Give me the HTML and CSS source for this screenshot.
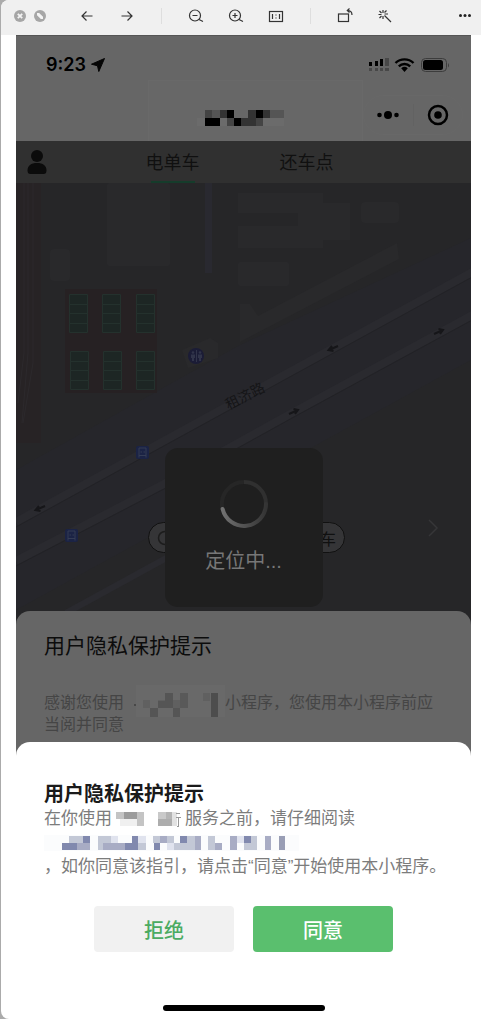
FILE: index.html
```html
<!DOCTYPE html>
<html lang="zh-CN">
<head>
<meta charset="utf-8">
<meta name="viewport" content="width=device-width, initial-scale=1">
<title>用户隐私保护提示</title>
<link rel="stylesheet" href="styles.css">
</head>
<body>
<div class="window">
  <header class="toolbar">
    <button class="win-btn" aria-label="关闭"><svg width="14" height="14" viewBox="0 0 14 14"><circle cx="7" cy="7" r="6" fill="#a6a6a6"/><path d="M4.800 4.800l4.400 4.400M9.200 4.800l-4.400 4.400" stroke="#f4f4f4" stroke-width="1.800"/></svg></button>
    <button class="win-btn" aria-label="缩放"><svg width="14" height="14" viewBox="0 0 14 14"><circle cx="7" cy="7" r="6" fill="#a6a6a6"/><path d="M4 6.200V4h2.200L10 7.800V10H7.800z" fill="#f4f4f4"/></svg></button>
    <div class="tools">
      <button class="tool" aria-label="后退"><svg class="ico" viewBox="0 0 20 20"><path d="M15.500 10H5M9.500 5.500L5 10l4.500 4.500"/></svg></button>
      <button class="tool" aria-label="前进"><svg class="ico" viewBox="0 0 20 20"><path d="M4.500 10H15M10.500 5.500L15 10l-4.500 4.500"/></svg></button>
      <span class="sep"></span>
      <button class="tool" aria-label="缩小"><svg class="ico" viewBox="0 0 20 20"><circle cx="9" cy="9.500" r="5.500"/><path d="M6.500 9.500h5M13 13.500l4 2"/></svg></button>
      <button class="tool" aria-label="放大"><svg class="ico" viewBox="0 0 20 20"><circle cx="9" cy="9.500" r="5.500"/><path d="M6.500 9.500h5M9 7v5M13 13.500l4 2"/></svg></button>
      <button class="tool" aria-label="实际大小"><svg class="ico" viewBox="0 0 20 20"><rect x="3.500" y="5.500" width="13" height="10"/><path d="M6.500 8v5M13.500 8v5M10 8.500v1M10 11.500v1"/></svg></button>
      <span class="sep"></span>
      <button class="tool" aria-label="旋转"><svg class="ico" viewBox="0 0 20 20"><rect x="3.500" y="8" width="10" height="7.500"/><path d="M12.500 4.500c3 0 4.500 1.500 4.500 4.500M14.500 2.500l-2.200 2 2.200 2"/></svg></button>
      <button class="tool" aria-label="标记"><svg class="ico" viewBox="0 0 20 20"><path d="M9.500 9.500l6.500 6.500M8 4v3M8 10v3M3.500 8.500h3M9.500 8h3.500M4.500 5l2 2M11.500 4.500l-2 2M6.500 10l-2 2"/></svg></button>
    </div>
    <button class="tool more" aria-label="更多"><svg class="ico" viewBox="0 0 20 20"><g fill="#222" stroke="none"><circle cx="5.500" cy="9.500" r="1.500"/><circle cx="10" cy="9.500" r="1.500"/><circle cx="14.500" cy="9.500" r="1.500"/></g></svg></button>
  </header>

  <main class="phone">
    <div class="status">
      <span class="time">9:23</span>
      <svg class="locate" width="14" height="14" viewBox="0 0 14 14"><path d="M13.500.5L7.800 13.500 6.500 7.800.5 6.200z" fill="#050505" stroke="#050505" stroke-linejoin="round"/></svg>
      <svg class="signals" width="82" height="16" viewBox="0 0 82 16">
        <path d="M1 5h3v4H1zM7 4h3v5H7zM12 2h3v7h-3z" fill="#000"/>
        <path d="M17 1h4v8h-4zM1 11h3v3H1zM7 11h3v3H7zM12 11h3v3h-3zM17 11h4v3h-4z" fill="#484848"/>
        <g fill="none" stroke="#000" stroke-width="2.400"><path d="M27.500 6a13 13 0 0 1 18 0M30.800 9.300a8.200 8.200 0 0 1 11.400 0"/></g>
        <path d="M33.200 11.300a5 5 0 0 1 6.600 0L36.500 15z" fill="#000"/>
        <rect x="53.500" y="1.500" width="25" height="13" rx="4" fill="none" stroke="#3c3c3c"/>
        <rect x="55" y="3" width="20" height="10" rx="2.500" fill="#000"/>
        <path d="M80 6v4.500q2-2 0-4.500" fill="#3c3c3c"/>
      </svg>
    </div>

    <div class="navbar">
      <div class="app-name">
        <svg width="88" height="16" viewBox="197 110 88 16" role="img" aria-label="小程序名称" shape-rendering="crispEdges">
          <path d="M205 110h7v8h-7zM227 118h7v8h-7zM256 118h7v8h-7z" fill="#444"/>
          <path d="M212 110h8v8h-8zM270 110h14v8h-14z" fill="#555"/>
          <path d="M220 110h7v8h-7zM248 110h8v8h-8zM263 110h7v8h-7zM241 118h15v8h-15z" fill="#333"/>
          <path d="M227 110h7v8h-7zM205 118h15v8h-15zM234 118h7v8h-7zM256 110h7v8h-7z" fill="#000"/>
          <path d="M197 118h8v8h-8zM220 118h7v8h-7zM263 118h21v8h-21z" fill="#6b6b6b"/>
        </svg>
      </div>
      <div class="capsule">
        <button class="cap-btn" aria-label="更多"><svg width="24" height="24" viewBox="0 0 24 24"><circle cx="3.500" cy="12" r="2.300"/><circle cx="12" cy="12" r="4"/><circle cx="20.500" cy="12" r="2.300"/></svg></button>
        <span class="cap-sep"></span>
        <button class="cap-btn" aria-label="关闭小程序"><svg width="24" height="24" viewBox="0 0 24 24"><circle cx="12" cy="12" r="9" fill="none" stroke="#000" stroke-width="2.500"/><circle cx="12" cy="12" r="3.800"/></svg></button>
      </div>
    </div>

    <nav class="tabs">
      <button class="me" aria-label="我的"><svg width="20" height="24" viewBox="0 0 20 24"><circle cx="10" cy="6" r="6"/><path d="M.5 20.500C.5 15.500 4 13 10 13s9.500 2.500 9.500 7.500q0 3.500-3 3.500h-13q-3 0-3-3.500z"/></svg></button>
      <a class="tab active" href="#bikes">电单车</a>
      <a class="tab" href="#points">还车点</a>
    </nav>

    <section class="map" aria-label="地图">
      <svg class="canvas" viewBox="16 183 455 445" preserveAspectRatio="xMidYMin slice">
        <rect x="16" y="183" width="455" height="445" fill="#262628"/>
        <path d="M471 238L240 345 16 470v140l455-250z" fill="#26262b"/>
        <path d="M16 183h25v260H16z" fill="#272325"/>
        <path d="M24 183v170l-6 50M28 183v170l-6 70M33 183v180l-10 60" stroke="#2c292c" fill="none"/>
        <g fill="#29292b">
          <rect x="107" y="183" width="63" height="83" rx="2"/>
          <rect x="50" y="249" width="20" height="32" rx="4"/>
          <path d="M238 193h85v10h27v37h-27v8h-85v-22h60v-13h-60z"/>
          <rect x="361" y="202" width="38" height="21" rx="4"/>
          <rect x="238" y="262" width="51" height="24" rx="2"/>
          <path d="M397 243l2 16-144 75-15 8v-38h10l8 12z"/>
          <path d="M182 350l28-12 8 5v15l-30 10z"/>
        </g>
        <path d="M205 183h7v90h-7z" fill="#292930"/>
        <path d="M65 289h92v104H65z" fill="#262123"/>
        <g fill="#1d2624" stroke="#24312d">
          <path id="court" d="M69.500 294.500h18v38h-18zM69.500 304.500h18M69.500 313.500h18M69.500 323.500h18"/>
          <use href="#court" x="33"/><use href="#court" x="67"/>
          <use href="#court" x="1" y="57"/><use href="#court" x="34" y="57"/><use href="#court" x="67" y="57"/>
        </g>
        <g fill="none" stroke="#2a2a2f" stroke-width="8">
          <path d="M476 270L16 522M476 313L294 412 164 484 16 561"/>
          <path d="M66 613L170 556" stroke-width="6"/>
        </g>
        <g fill="none" stroke="#222226" stroke-width="1"><path d="M476 275L16 527M476 318L294 417 164 489 16 566"/></g>
        <g fill="none" stroke="#161619" stroke-width="2">
          <path id="arrow-l" d="M338 346l-9 4M332 346l-3.500 4 5 1"/>
          <use href="#arrow-l" x="-293" y="160"/>
          <path id="arrow-r" d="M434 334l9-4M438.500 329l4.500 1-3 4"/>
          <use href="#arrow-r" x="-145" y="80"/>
        </g>
        <circle cx="196" cy="356" r="8" fill="#1b1c36"/>
        <path d="M196.500 350v12" stroke="#31344a" fill="none"/>
        <g fill="#31344a"><circle cx="193" cy="352.500" r="1.300"/><circle cx="200" cy="352.500" r="1.300"/><path d="M191 354.500h4v3.500h-1v3h-2v-3h-1zM198 354.500h4v3.500h-1v3h-2v-3h-1z"/></g>
        <g id="bus"><rect x="136" y="446" width="13" height="13" rx="2" fill="#1b2345"/><path d="M139 457.500v-9.500h7v9.500M139 455.500h7M140.500 452h1.500M143.500 452h1.500" stroke="#343c55" fill="none"/></g>
        <use href="#bus" x="-71" y="83"/>
        <text class="road-name" x="245" y="401" text-anchor="middle" transform="rotate(-27 245 396)">租济路</text>
      </svg>
      <button class="pill"><svg width="16" height="16" viewBox="0 0 16 16"><circle cx="8" cy="8" r="6.500" fill="none" stroke="#1c1c1c" stroke-width="1.500"/></svg><span>车</span></button>
      <button class="next" aria-label="下一个"><svg width="12" height="18" viewBox="0 0 12 18"><path d="M2 1l8 8-8 8" fill="none" stroke="#363638" stroke-width="1.500"/></svg></button>
      <div class="toast" role="status">
        <svg width="48" height="48" viewBox="0 0 48 48">
          <defs><linearGradient id="fade" x1="0" x2="1" y1="0" y2="0"><stop offset="0" stop-color="#707070"/><stop offset="1" stop-color="#343434"/></linearGradient></defs>
          <g fill="none" stroke-width="4"><path d="M2.500 29A22 22 0 0 1 24 2" stroke="#262626"/><path d="M24 2a22 22 0 0 1 22 22" stroke="#303030"/><path d="M46 24A22 22 0 0 1 2.600 29" stroke="url(#fade)" stroke-linecap="round"/></g>
        </svg>
        <span>定位中...</span>
      </div>
    </section>

    <section class="sheet">
      <h2 class="sheet-title">用户隐私保护提示</h2>
      <p class="sheet-text"><span>感谢您使用</span><svg class="name-blur" width="101" height="32" viewBox="124 682 101 32" shape-rendering="crispEdges">
        <path d="M136 682h89v32h-89z" fill="#696969"/><path d="M134 701h2v2h-2z" fill="#484848"/>
        <path d="M143 697h7v8h-7zM158 697h7v8h-7zM172 697h8v8h-8zM203 690h7v8h-7z" fill="#606060"/>
        <path d="M165 690h8v15h-8zM150 705h8v9h-8zM173 705h7v9h-7zM158 698h7v7h-7z" fill="#555"/>
        <path d="M180 690h8v15h-8z" fill="#595959"/><path d="M211 690h7v24h-7z" fill="#4d4d4d"/>
      </svg><span>小程序，您使用本小程序前应</span><span>当阅并同意</span></p>
    </section>

    <section class="dialog" role="dialog" aria-labelledby="dialog-title">
      <h1 class="dialog-title" id="dialog-title">用户隐私保护提示</h1>
      <div class="dialog-text">
        <p>在你使用<svg class="brand-blur" width="73" height="16" viewBox="112 811 73 16" shape-rendering="crispEdges">
          <path d="M116 811h8v7h-8zM137 811h7v14h-7z" fill="#c4c4c4"/><path d="M124 811h13v7h-13z" fill="#9c9c9c"/><path d="M120 818h17v7h-17z" fill="#f0f0f0"/>
          <path d="M158 811h8v7h-8z" fill="#c9c9c9"/><path d="M166 811h7v7h-7z" fill="#b4b4b4"/><path d="M158 818h14v7h-14z" fill="#adadad"/><path d="M172 811h5v14h-5z" fill="#e2e2e2"/>
          <path d="M176 812.500h4M176 816.500h5M178.500 817v8h-2" stroke="#999" fill="none"/>
        </svg>服务之前，请仔细阅读</p>
        <a class="guide" href="#guide" aria-label="隐私保护指引"><svg width="260" height="16" viewBox="44 835 260 16" shape-rendering="crispEdges">
          <path d="M44 835h255v16H44z" fill="#fbfcfd"/>
          <g fill="#c3c8d6"><path d="M69 836h14v7h-14zM98 836h7v14h-7zM105 836h6v7h-6zM132 843h14v7h-14zM153 836h21v7h-21zM173 843h14v7h-14zM187 836h8v14h-8zM208 836h7v14h-7zM222 843h-7v7h7zM244 843h13v7h-13zM250 836h7v7h-7z"/></g>
          <g fill="#8189ae"><path d="M62 843h15v7h-15zM83 836h7v7h-7zM132 836h6v14h-6zM125 843h7v7h-7zM154 843h6v7h-6zM180 836h7v7h-7zM244 836h7v7h-7z"/></g>
          <g fill="#a8acc4"><path d="M77 843h13v7h-13zM103 843h22v7h-22zM160 836h7v7h-7zM195 836h6v14h-6zM215 843h7v7h-7zM230 836h7v14h-7zM265 836h6v14h-6z"/></g>
          <path d="M279 836h6v14h-6z" fill="#999eb5"/>
          <path d="M111 836h7v7h-7zM167 843h7v7h-7zM138 836h8v7h-8zM237 836h7v7h-7z" fill="#e0e3ee"/>
        </svg></a>
        <p>，如你同意该指引，请点击“同意”开始使用本小程序。</p>
      </div>
      <div class="actions">
        <button class="btn refuse">拒绝</button>
        <button class="btn agree">同意</button>
      </div>
      <div class="home-bar"></div>
    </section>
  </main>
</div>
</body>
</html>
```
FILE: styles.css
```css
* { box-sizing: border-box; }

body {
  margin: 0;
  background: #ababab;
  font-family: "Liberation Sans", "Noto Sans CJK SC", sans-serif;
}

button {
  padding: 0;
  border: 0;
  background: none;
  font: inherit;
  color: inherit;
}

h1, h2, p { margin: 0; }
svg { display: block; flex: none; }

.window {
  display: flex;
  flex-direction: column;
  min-height: 100vh;
  margin-left: 1px;
  background: #fff;
  border-radius: 8px 0 0 8px;
  overflow: hidden;
}

/* Viewer toolbar */
.toolbar {
  display: flex;
  align-items: center;
  height: 35px;
  padding: 0 0 3px 9px;
  background: #f0f0f0;
}
.win-btn {
  display: flex;
  justify-content: center;
  width: 20px;
}
.tools {
  display: flex;
  align-items: center;
  margin: 0 auto 0 17px;
}
.tool {
  display: flex;
  justify-content: center;
  width: 40px;
}
.more { width: 32px; }
.ico {
  width: 20px;
  height: 20px;
  fill: none;
  stroke: #333;
  stroke-width: 1.2;
}
.sep {
  width: 1px;
  height: 16px;
  margin: 0 14px;
  background: #dedede;
}

/* Phone screen */
.phone {
  display: flex;
  flex: 1;
  flex-direction: column;
  margin: 0 10px 0 15px;
  background: #666;
}
.status {
  display: flex;
  align-items: center;
  height: 45px;
  padding: 13px 21px 0 30px;
  border-top: 1px solid #555;
  color: #000;
}
.time {
  font: 600 18px/24px Inter, sans-serif;
}
.locate { margin-left: 5px; }
.signals { margin-left: auto; }

.navbar {
  display: flex;
  justify-content: flex-end;
  height: 61px;
}
.app-name {
  display: flex;
  flex: 1;
  align-items: center;
  margin-left: 132px;
  padding: 14px 0 0 48px;
  border: 1px solid #696969;
  border-bottom: 0;
  background: #676767;
}
.capsule {
  display: flex;
  align-items: center;
  width: 100px;
  height: 40px;
  margin: 15px 8px 0 0;
  border: 1px solid #686868;
  border-radius: 20px;
}
.cap-btn {
  display: flex;
  flex: 1;
  justify-content: center;
}
.cap-sep {
  width: 1px;
  height: 22px;
  background: #626262;
}

.tabs {
  display: flex;
  justify-content: center;
  gap: 80px;
  position: relative;
  height: 42px;
  padding-right: 8px;
  background: #303030;
}
.me {
  position: absolute;
  left: 11px;
  top: 9px;
}
.me svg { fill: #0b0b0b; }
.tab {
  position: relative;
  color: #101010;
  font-size: 18px;
  line-height: 44px;
  text-decoration: none;
}
.tab.active::after {
  content: "";
  position: absolute;
  left: 5px;
  right: 5px;
  top: 40px;
  height: 2px;
  background: #153c2b;
}

/* Map */
.map {
  position: relative;
  flex: 1;
  min-height: 444px;
  overflow: hidden;
  background: #262628;
}
.canvas {
  position: absolute;
  inset: 0;
  width: 100%;
  height: 100%;
}
.road-name {
  font-size: 14px;
  fill: #151517;
}
.pill {
  position: absolute;
  top: 339px;
  left: 29%;
  display: flex;
  align-items: center;
  justify-content: space-between;
  width: 197px;
  height: 31px;
  padding: 0 8px;
  border: 1px solid #111;
  border-radius: 16px;
  background: #353537;
  color: #101010;
  font-size: 16px;
}
.next {
  position: absolute;
  top: 336px;
  right: 32px;
}
.toast {
  position: absolute;
  top: 265px;
  left: 0;
  right: 0;
  display: flex;
  flex-direction: column;
  align-items: center;
  gap: 19px;
  width: 158px;
  height: 159px;
  margin: 0 auto;
  padding-top: 32px;
  border-radius: 13px;
  background: #1f1f1f;
  color: #777;
  font-size: 20px;
  line-height: 28px;
}

/* Underlying privacy sheet */
.sheet {
  position: relative;
  margin-top: -16px;
  padding: 20px 28px 22px;
  border-radius: 14px 14px 0 0;
  background: #666;
}
.sheet-title {
  color: #0c0c0c;
  font-size: 21px;
  font-weight: 400;
  line-height: 30px;
}
.sheet-text {
  margin-top: 31px;
  color: #454545;
  font-size: 16px;
  line-height: 22px;
}
.name-blur {
  display: inline-block;
  margin: -10px 0 -4px;
  vertical-align: middle;
}

/* Front privacy dialog */
.dialog {
  position: relative;
  margin-top: -16px;
  padding: 39px 28px 8px;
  border-radius: 14px 14px 0 0;
  background: #fff;
}
.dialog-title {
  color: #1a1a1a;
  font-size: 20px;
  font-weight: 700;
  line-height: 26px;
}
.dialog-text {
  margin-right: -16px;
  color: #7c7c7c;
  font-size: 17px;
  line-height: 24px;
}
.brand-blur {
  display: inline-block;
  vertical-align: middle;
}
.guide {
  display: flex;
  align-items: center;
  height: 24px;
}
.actions {
  display: flex;
  justify-content: center;
  gap: 19px;
  margin-top: 27px;
}
.btn {
  width: 140px;
  height: 46px;
  border-radius: 4px;
  font-size: 20px;
  font-weight: 500;
}
.refuse {
  background: #f1f1f1;
  color: #4bab62;
}
.agree {
  background: #5abf6e;
  color: #fff;
}
.home-bar {
  width: 162px;
  height: 6px;
  margin: 53px auto 0;
  border-radius: 3px;
  background: #000;
}
```
